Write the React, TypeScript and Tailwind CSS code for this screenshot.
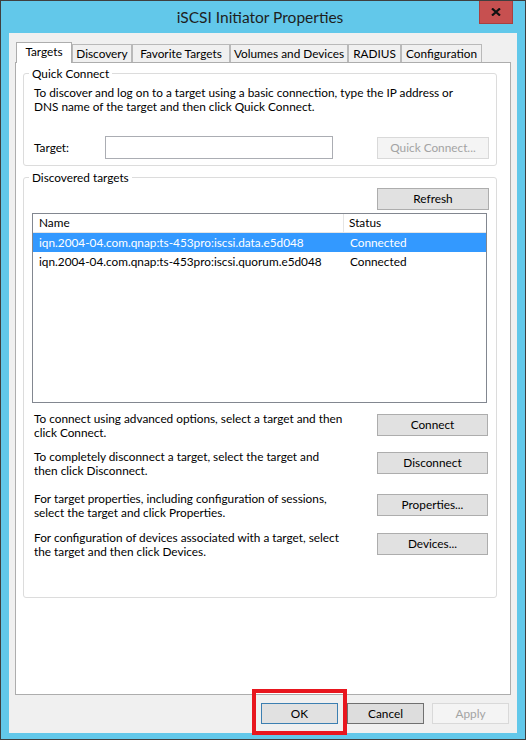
import React from 'react';

const btn =
  'h-[22px] border border-[#adadad] bg-[#e1e1e1] flex items-center justify-center text-black';

const tabs = [
  { label: 'Discovery', w: 'w-[60px]' },
  { label: 'Favorite Targets', w: 'w-[98px]' },
  { label: 'Volumes and Devices', w: 'w-[118px]' },
  { label: 'RADIUS', w: 'w-[53px]' },
  { label: 'Configuration', w: 'w-[81px]' },
];

const targets = [
  { name: 'iqn.2004-04.com.qnap:ts-453pro:iscsi.data.e5d048', status: 'Connected', selected: true },
  { name: 'iqn.2004-04.com.qnap:ts-453pro:iscsi.quorum.e5d048', status: 'Connected', selected: false },
];

function ActionRow({ lines, label, className }: { lines: string[]; label: string; className: string }) {
  return (
    <div className={`flex items-start justify-between ${className}`}>
      <p className="ml-[10px] whitespace-nowrap leading-[14px]">
        {lines[0]}
        <br />
        {lines[1]}
      </p>
      <button className={`${btn} mt-[2px] mr-[8px] w-[111px]`}>{label}</button>
    </div>
  );
}

export default function App() {
  return (
    <div className="relative w-[528px] h-[745px] bg-white font-['Lato','Liberation_Sans',sans-serif] text-[11.8px] leading-[14px] text-black">
      <div className="w-[526px] h-[740px] border border-[#3f3f3f] bg-[#62c8ea] flex flex-col">
        {/* title bar */}
        <div className="h-[32px] flex items-start">
          <div className="flex-1 pl-[40px] pt-[6px] text-center text-[15.5px] leading-[20px] text-[#1e1e1e]">
            iSCSI Initiator Properties
          </div>
          <button className="mr-[12px] w-[34px] h-[23px] bg-[#c75050] border border-[#a84040] border-t-0 flex items-center justify-center">
            <svg width="10" height="8" viewBox="0 0 10 8">
              <path d="M1 0.5 L9 7.5 M9 0.5 L1 7.5" stroke="#111" strokeWidth="2.2" />
            </svg>
          </button>
        </div>

        {/* client area */}
        <div className="mx-[8px] h-[700px] bg-[#f0f0f0] flex flex-col">
          <div className="relative z-10 mt-[9px] ml-[7px] h-[20px] flex items-end">
            <div className="w-[56px] h-[21px] mb-[-1px] bg-white border border-b-0 border-[#adadad] flex items-center justify-center pb-[2px]">
              Targets
            </div>
            {tabs.map((t) => (
              <div
                key={t.label}
                className={`${t.w} h-[18px] bg-[#f0f0f0] border border-b-0 border-[#b9b9b9] flex items-center justify-center`}
              >
                {t.label}
              </div>
            ))}
          </div>

          <div className="ml-[6px] w-[496px] h-[633px] bg-white border border-[#adadad] flex flex-col">
            <fieldset className="ml-[7px] mt-[3px] w-[474px] h-[100px] border border-[#dcdcdc] rounded-[3px]">
              <legend className="ml-[5px] px-[3px] leading-[15px]">Quick Connect</legend>
              <p className="mt-[5px] ml-[10px] whitespace-nowrap leading-[14px]">
                To discover and log on to a target using a basic connection, type the IP address or
                <br />
                DNS name of the target and then click Quick Connect.
              </p>
              <div className="mt-[22px] h-[23px] flex items-center">
                <span className="ml-[10px] w-[71px]">Target:</span>
                <div className="w-[228px] h-[23px] border border-[#abadb3] bg-white" />
                <button className="ml-[44px] w-[112px] h-[22px] border border-[#d9d9d9] bg-[#f4f4f4] text-[#a3a3a3] flex items-center justify-center">
                  Quick Connect...
                </button>
              </div>
            </fieldset>

            <fieldset className="ml-[7px] mt-[4px] w-[474px] h-[428px] border border-[#dcdcdc] rounded-[3px]">
              <legend className="ml-[5px] px-[3px] leading-[15px]">Discovered targets</legend>
              <div className="mt-[3px] flex justify-end">
                <button className={`${btn} mr-[7px] w-[112px]`}>Refresh</button>
              </div>
              <div className="mt-[3px] ml-[8px] w-[455px] h-[190px] border border-[#828790] bg-white">
                <div className="h-[19px] flex border-b border-[#e5e5e5]">
                  <div className="w-[311px] pl-[6px] border-r border-[#e5e5e5] flex items-center">Name</div>
                  <div className="pl-[5px] flex items-center">Status</div>
                </div>
                {targets.map((r) => (
                  <div
                    key={r.name}
                    className={`h-[19px] flex items-center ${r.selected ? 'bg-[#3399ff] text-white' : ''}`}
                  >
                    <div className="w-[311px] pl-[6px] whitespace-nowrap">{r.name}</div>
                    <div className="pl-[6px]">{r.status}</div>
                  </div>
                ))}
              </div>

              <ActionRow
                className="mt-[9px]"
                lines={['To connect using advanced options, select a target and then', 'click Connect.']}
                label="Connect"
              />
              <ActionRow
                className="mt-[10px]"
                lines={['To completely disconnect a target, select the target and', 'then click Disconnect.']}
                label="Disconnect"
              />
              <ActionRow
                className="mt-[14px]"
                lines={['For target properties, including configuration of sessions,', 'select the target and click Properties.']}
                label="Properties..."
              />
              <ActionRow
                className="mt-[11px]"
                lines={['For configuration of devices associated with a target, select', 'the target and then click Devices.']}
                label="Devices..."
              />
            </fieldset>
          </div>

          <div className="mt-[8px] mr-[8px] flex justify-end gap-[8px]">
            <button className="mr-[1px] w-[77px] h-[21px] border border-[#3c7fb1] bg-[#e1e1e1] flex items-center justify-center">
              OK
            </button>
            <button className="w-[77px] h-[21px] border border-[#707070] bg-[#dddddd] flex items-center justify-center">
              Cancel
            </button>
            <button className="w-[77px] h-[21px] border border-[#d9d9d9] bg-[#f4f4f4] text-[#a3a3a3] flex items-center justify-center">
              Apply
            </button>
          </div>
        </div>
      </div>

      {/* red highlight around OK */}
      <div className="absolute left-[252px] top-[689px] w-[95px] h-[46px] border-[4px] border-[#e8161e]" />
    </div>
  );
}
